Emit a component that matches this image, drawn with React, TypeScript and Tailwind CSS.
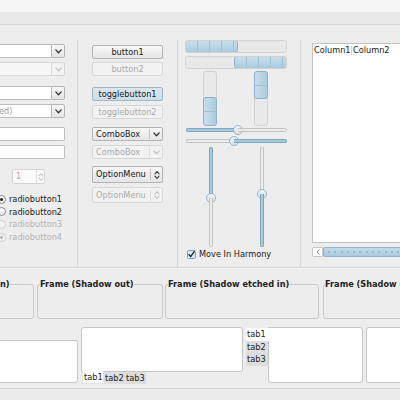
import React from "react";

function Chevron({ c = "#2e3436" }: { c?: string }) {
  return (
    <svg width="7" height="5" viewBox="0 0 7 5">
      <path d="M0.8 0.9 L3.5 3.7 L6.2 0.9" fill="none" stroke={c} strokeWidth="1.3" strokeLinecap="round" strokeLinejoin="round" />
    </svg>
  );
}

function UpDown({ c = "#2e3436" }: { c?: string }) {
  return (
    <svg width="6" height="10" viewBox="0 0 6 10">
      <path d="M1 3.8 L3 1.5 L5 3.8 M1 6.2 L3 8.5 L5 6.2" fill="none" stroke={c} strokeWidth="1.1" strokeLinecap="round" strokeLinejoin="round" />
    </svg>
  );
}

function ComboEntry({ text, disabled, mt }: { text?: string; disabled?: boolean; mt: string }) {
  return (
    <div className={"flex h-[14px] w-[65px] " + mt}>
      <div
        className={
          disabled
            ? "flex-1 border-y border-[#d6d6d6] bg-[#f7f7f7]"
            : "flex-1 border-y border-[#bdbdbd] bg-white flex items-center overflow-hidden text-[#9a9a9a] -ml-px"
        }
      >
        {text}
      </div>
      <div
        className={
          disabled
            ? "w-[14px] border border-[#d6d6d6] rounded-r-[2px] bg-[#f3f3f3] flex items-center justify-center"
            : "w-[14px] border border-[#b6b6b6] rounded-r-[2px] bg-gradient-to-b from-[#f8f8f8] to-[#e6e6e6] flex items-center justify-center"
        }
      >
        <Chevron c={disabled ? "#c4c4c4" : "#2e3436"} />
      </div>
    </div>
  );
}

function Entry({ mt }: { mt: string }) {
  return <div className={"h-[14px] w-[65px] bg-white border-y border-r border-[#bdbdbd] rounded-r-[2px] " + mt} />;
}

function Button({ label, disabled, active, mt }: { label: string; disabled?: boolean; active?: boolean; mt: string }) {
  const cls = disabled
    ? "border-[#d8d8d8] bg-[#f2f2f2] text-[#ababab]"
    : active
    ? "border-[#9fb7c8] bg-gradient-to-b from-[#dbe7ef] to-[#cddde8] text-[#222]"
    : "border-[#b3b3b3] bg-gradient-to-b from-[#f8f8f8] to-[#e5e5e5] text-[#222]";
  return (
    <div className={"h-[14px] w-[71px] border rounded-[2px] flex items-center justify-center " + cls + " " + mt}>{label}</div>
  );
}

function ComboBox({ disabled, mt }: { disabled?: boolean; mt: string }) {
  return (
    <div
      className={
        "h-[14px] w-[71px] border rounded-[2px] flex items-center " +
        (disabled ? "border-[#d8d8d8] bg-[#f2f2f2] text-[#ababab] " : "border-[#b3b3b3] bg-gradient-to-b from-[#f8f8f8] to-[#e5e5e5] text-[#222] ") +
        mt
      }
    >
      <div className="w-[56px] pl-[3px]">ComboBox</div>
      <div className={disabled ? "w-px h-[10px] bg-[#dcdcdc]" : "w-px h-[10px] bg-[#c3c3c3]"} />
      <div className="flex-1 flex items-center justify-center">
        <Chevron c={disabled ? "#c4c4c4" : "#2e3436"} />
      </div>
    </div>
  );
}

function OptionMenu({ disabled, mt, h }: { disabled?: boolean; mt: string; h: string }) {
  return (
    <div
      className={
        "w-[71px] border rounded-[2px] flex items-center " +
        h +
        " " +
        (disabled ? "border-[#d8d8d8] bg-[#f2f2f2] text-[#ababab] " : "border-[#b3b3b3] bg-gradient-to-b from-[#f8f8f8] to-[#e5e5e5] text-[#111] ") +
        mt
      }
    >
      <div className="w-[57px] pl-[3px]">OptionMenu</div>
      <div className={disabled ? "w-px h-[11px] bg-[#dcdcdc]" : "w-px h-[11px] bg-[#c3c3c3]"} />
      <div className="flex-1 flex items-center justify-center">
        <UpDown c={disabled ? "#c4c4c4" : "#2e3436"} />
      </div>
    </div>
  );
}

function Radio({ label, checked, disabled }: { label: string; checked?: boolean; disabled?: boolean }) {
  return (
    <div className="h-[12.6px] flex items-center -ml-[3px]">
      <div
        className={
          "w-[9px] h-[9px] rounded-full border flex items-center justify-center " +
          (disabled ? "border-[#cdcdcd] bg-[#f3f3f3]" : "border-[#8c8c8c] bg-gradient-to-b from-[#ffffff] to-[#ececec]")
        }
      >
        {checked ? <div className={disabled ? "w-[3px] h-[3px] rounded-full bg-[#b5b5b5]" : "w-[3px] h-[3px] rounded-full bg-[#222]"} /> : null}
      </div>
      <span className={disabled ? "ml-[3px] text-[#b3b3b3]" : "ml-[3px] text-[#222]"}>{label}</span>
    </div>
  );
}

function Seg({ n, dir }: { n: number; dir: "h" | "v" }) {
  const arr = Array.from({ length: n });
  return (
    <>
      {arr.map((_, i) => (
        <div key={i} className={dir === "h" ? "w-[12px] h-full border-r border-[#9fbfd3] flex-none" : "h-[14px] w-full border-b border-[#9fbfd3] flex-none"} />
      ))}
    </>
  );
}

function Thumb() {
  return <div className="w-[10px] h-[10px] rounded-full border border-[#9bb4c5] bg-gradient-to-b from-[#f0f5f8] to-[#d4e2eb] flex-none z-10" />;
}

export default function App() {
  return (
    <div className="w-[400px] h-[400px] overflow-hidden bg-[#ededed] text-[#222] text-[8.2px] leading-none font-['DejaVu_Sans',sans-serif]">
      <div className="h-[12px] bg-[#f6f6f6]" />
      <div className="h-[13px] bg-[#e8e8e8] border-b border-[#d6d6d6]" />

      {/* main area */}
      <div className="h-[242px] pt-[15px] flex">
        {/* column 1 */}
        <div className="w-[77px] flex flex-col flex-none">
          <ComboEntry mt="mt-[4px]" />
          <ComboEntry mt="mt-[4px]" disabled />
          <ComboEntry mt="mt-[10px]" />
          <ComboEntry mt="mt-[4px]" text="ed)" />
          <Entry mt="mt-[9px]" />
          <Entry mt="mt-[4px]" />
          <div className="mt-[10px] ml-[12px] h-[15px] w-[33px] flex border border-[#d3d3d3] rounded-[2px] bg-[#fbfbfb]">
            <div className="flex-1 flex items-center pl-[3px] text-[#ababab]">1</div>
            <div className="w-px bg-[#e0e0e0]" />
            <div className="w-[7px] flex flex-col items-center justify-center">
              <UpDown c="#c8c8c8" />
            </div>
          </div>
          <div className="mt-[9px] flex flex-col">
            <Radio label="radiobutton1" checked />
            <Radio label="radiobutton2" />
            <Radio label="radiobutton3" disabled />
            <Radio label="radiobutton4" disabled checked />
          </div>
        </div>
        <div className="w-px bg-[#d6d6d6] flex-none" />

        {/* column 2 */}
        <div className="w-[99px] pl-[14px] flex flex-col flex-none">
          <Button label="button1" mt="mt-[5px]" />
          <Button label="button2" mt="mt-[3px]" disabled />
          <Button label="togglebutton1" mt="mt-[11px]" active />
          <Button label="togglebutton2" mt="mt-[4px]" disabled />
          <ComboBox mt="mt-[8px]" />
          <ComboBox mt="mt-[4px]" disabled />
          <OptionMenu mt="mt-[7px]" h="h-[17px]" />
          <OptionMenu mt="mt-[4px]" h="h-[16px]" disabled />
        </div>
        <div className="w-px bg-[#d6d6d6] flex-none" />

        {/* column 3 */}
        <div className="w-[122px] pl-[7px] flex flex-col flex-none">
          {/* progress 1 */}
          <div className="h-[13px] w-[102px] border border-[#d2d2d2] rounded-[3px] bg-[#e9e9e9] flex overflow-hidden">
            <div className="w-[53px] -m-px h-[13px] border border-[#8fb3ca] rounded-[3px] bg-gradient-to-b from-[#c9dfeb] to-[#aacbdf] flex overflow-hidden">
              <Seg n={4} dir="h" />
            </div>
          </div>
          {/* progress 2 */}
          <div className="mt-[3px] h-[13px] w-[102px] border border-[#d2d2d2] rounded-[3px] bg-[#e9e9e9] flex justify-end overflow-hidden">
            <div className="w-[53px] -m-px h-[13px] border border-[#8fb3ca] rounded-[3px] bg-gradient-to-b from-[#c9dfeb] to-[#aacbdf] flex overflow-hidden">
              <Seg n={4} dir="h" />
            </div>
          </div>
          {/* vertical progress */}
          <div className="mt-[2px] h-[55px] flex">
            <div className="ml-[18px] w-[14px] h-full border border-[#d2d2d2] rounded-[3px] bg-[#e9e9e9] flex flex-col justify-end">
              <div className="h-[29px] -m-px border border-[#8fb3ca] rounded-[3px] bg-gradient-to-r from-[#c9dfeb] to-[#aacbdf] flex flex-col overflow-hidden">
                <Seg n={1} dir="v" />
              </div>
            </div>
            <div className="ml-[37px] w-[14px] h-full border border-[#d2d2d2] rounded-[3px] bg-[#e9e9e9] flex flex-col">
              <div className="h-[28px] -m-px border border-[#8fb3ca] rounded-[3px] bg-gradient-to-r from-[#c9dfeb] to-[#aacbdf] flex flex-col overflow-hidden">
                <Seg n={1} dir="v" />
              </div>
            </div>
          </div>
          {/* hscale 1 */}
          <div className="mt-[-1px] ml-[1px] w-[101px] h-[10px] flex items-center">
            <div className="w-[52px] h-[4px] rounded-l-[2px] border border-r-0 border-[#7fa6bf] bg-[#a9c9dc] flex-none" />
            <div className="-mx-[5px]"><Thumb /></div>
            <div className="flex-1 h-[4px] rounded-r-[2px] border border-l-0 border-[#c4c4c4] bg-[#ececec]" />
          </div>
          {/* hscale 2 */}
          <div className="mt-[1px] ml-[1px] w-[101px] h-[10px] flex items-center">
            <div className="w-[48px] h-[4px] rounded-l-[2px] border border-r-0 border-[#c4c4c4] bg-[#ececec] flex-none" />
            <div className="-mx-[5px]"><Thumb /></div>
            <div className="flex-1 h-[4px] rounded-r-[2px] border border-l-0 border-[#7fa6bf] bg-[#a9c9dc]" />
          </div>
          {/* vscales */}
          <div className="mt-[1px] h-[100px] flex">
            <div className="ml-[21px] w-[10px] h-full flex flex-col items-center">
              <div className="w-[4px] h-[51px] rounded-t-[2px] border border-b-0 border-[#7fa6bf] bg-[#a9c9dc] flex-none" />
              <div className="-my-[5px]"><Thumb /></div>
              <div className="w-[4px] flex-1 rounded-b-[2px] border border-t-0 border-[#c4c4c4] bg-[#ececec]" />
            </div>
            <div className="ml-[41px] w-[10px] h-full flex flex-col items-center">
              <div className="w-[4px] h-[47px] rounded-t-[2px] border border-b-0 border-[#c4c4c4] bg-[#ececec] flex-none" />
              <div className="-my-[5px]"><Thumb /></div>
              <div className="w-[4px] flex-1 rounded-b-[2px] border border-t-0 border-[#7fa6bf] bg-[#a9c9dc]" />
            </div>
          </div>
          {/* checkbox */}
          <div className="mt-[2px] h-[10px] flex items-center">
            <svg width="9" height="9" viewBox="0 0 9 9" className="ml-[2px]">
              <rect x="0.5" y="0.5" width="8" height="8" rx="1" fill="#dbe7ef" stroke="#7f9fb5" />
              <path d="M2 4.6 L3.7 6.6 L7.2 1.6" fill="none" stroke="#1e2a33" strokeWidth="1.4" strokeLinecap="round" strokeLinejoin="round" />
            </svg>
            <span className="ml-[3px]">Move In Harmony</span>
          </div>
        </div>
        <div className="w-px bg-[#d6d6d6] flex-none" />

        {/* column 4 */}
        <div className="flex-1 pl-[11px] flex flex-col">
          <div className="mt-[3px] h-[200px] bg-white border-l border-t border-b border-[#c2c2c2]">
            <div className="h-[13px] flex items-center">
              <div className="w-[38px] pl-[1px] flex-none">Column1</div>
              <div className="w-px h-[9px] bg-[#d4d4d4]" />
              <div className="pl-[1px] whitespace-nowrap">Column2</div>
            </div>
          </div>
          <div className="mt-[4px] h-[10px] flex">
            <div className="w-[11px] h-full border border-[#c6c6c6] rounded-l-[2px] bg-white flex items-center justify-center">
              <svg width="4" height="6" viewBox="0 0 4 6">
                <path d="M3.2 0.7 L0.9 3 L3.2 5.3" fill="none" stroke="#9a9a9a" strokeWidth="1" strokeLinecap="round" strokeLinejoin="round" />
              </svg>
            </div>
            <div className="flex-1 h-full border border-[#8fb3ca] rounded-l-[2px] bg-gradient-to-b from-[#c3dbe8] to-[#a9c9dd] flex items-center pl-[4px] gap-[4.3px] overflow-hidden">
              {Array.from({ length: 14 }).map((_, i) => (
                <div key={i} className="w-[2px] h-[2px] rounded-full bg-[#8fb0c5] flex-none" />
              ))}
            </div>
          </div>
        </div>
      </div>

      {/* horizontal separator */}
      <div className="h-px bg-[#d4d4d4]" />
      <div className="h-px bg-[#f7f7f7]" />

      {/* frames */}
      <div className="pt-[10px] h-[58px] flex font-bold">
        <fieldset className="-ml-[3px] w-[37px] h-[40px] border border-[#cacaca] rounded-[3px] px-[2px] flex-none">
          <legend className="leading-[10px] whitespace-nowrap">n)</legend>
        </fieldset>
        <fieldset className="ml-[3px] w-[126px] h-[40px] border border-[#cacaca] rounded-[3px] px-[2px] flex-none">
          <legend className="leading-[10px] whitespace-nowrap">Frame (Shadow out)</legend>
        </fieldset>
        <fieldset className="ml-[2px] w-[154px] h-[40px] border border-[#cacaca] rounded-[3px] px-[2px] flex-none">
          <legend className="leading-[10px] whitespace-nowrap">Frame (Shadow etched in)</legend>
        </fieldset>
        <fieldset className="ml-[4px] w-[120px] h-[40px] border border-[#cacaca] rounded-[3px] px-[1px] flex-none">
          <legend className="leading-[10px] whitespace-nowrap">Frame (Shadow etched out)</legend>
        </fieldset>
      </div>

      {/* notebooks */}
      <div className="h-[58px] flex">
        <div className="-ml-[2px] w-[80px] flex-none flex flex-col">
          <div className="mt-[13px] h-[43px] bg-white border border-[#c6c6c6] rounded-[3px]" />
        </div>
        <div className="ml-[3px] w-[162px] flex-none flex flex-col">
          <div className="h-[45px] bg-white border border-[#c6c6c6] rounded-t-[3px] rounded-br-[3px]" />
          <div className="h-[13px] flex -mt-px">
            <div className="ml-[1px] w-[22px] bg-white flex items-center pl-[1px] border-x border-b border-[#e3e3e3]">tab1</div>
            <div className="w-[21px] h-[12px] mt-px bg-[#dedede] flex items-center pl-[1px]">tab2</div>
            <div className="w-[21px] h-[12px] mt-px bg-[#dedede] flex items-center pl-[1px]">tab3</div>
          </div>
        </div>
        <div className="ml-[3px] flex-none flex">
          <div className="w-[22px] flex flex-col pt-[1px]">
            <div className="h-[13px] bg-white flex items-center pl-[1px] -mr-px z-10">tab1</div>
            <div className="h-[12px] bg-[#dedede] flex items-center pl-[1px]">tab2</div>
            <div className="h-[13px] bg-[#dedede] flex items-center pl-[1px]">tab3</div>
          </div>
          <div className="w-[95px] h-[56px] bg-white border border-[#c6c6c6] rounded-r-[3px] rounded-bl-[3px]" />
        </div>
        <div className="ml-[3px] w-[40px] h-[56px] flex-none bg-white border border-[#c6c6c6] rounded-[3px]" />
      </div>

      <div className="mt-[3px] h-px bg-[#d4d4d4]" />
      <div className="h-[11px] bg-[#ececec]" />
    </div>
  );
}
